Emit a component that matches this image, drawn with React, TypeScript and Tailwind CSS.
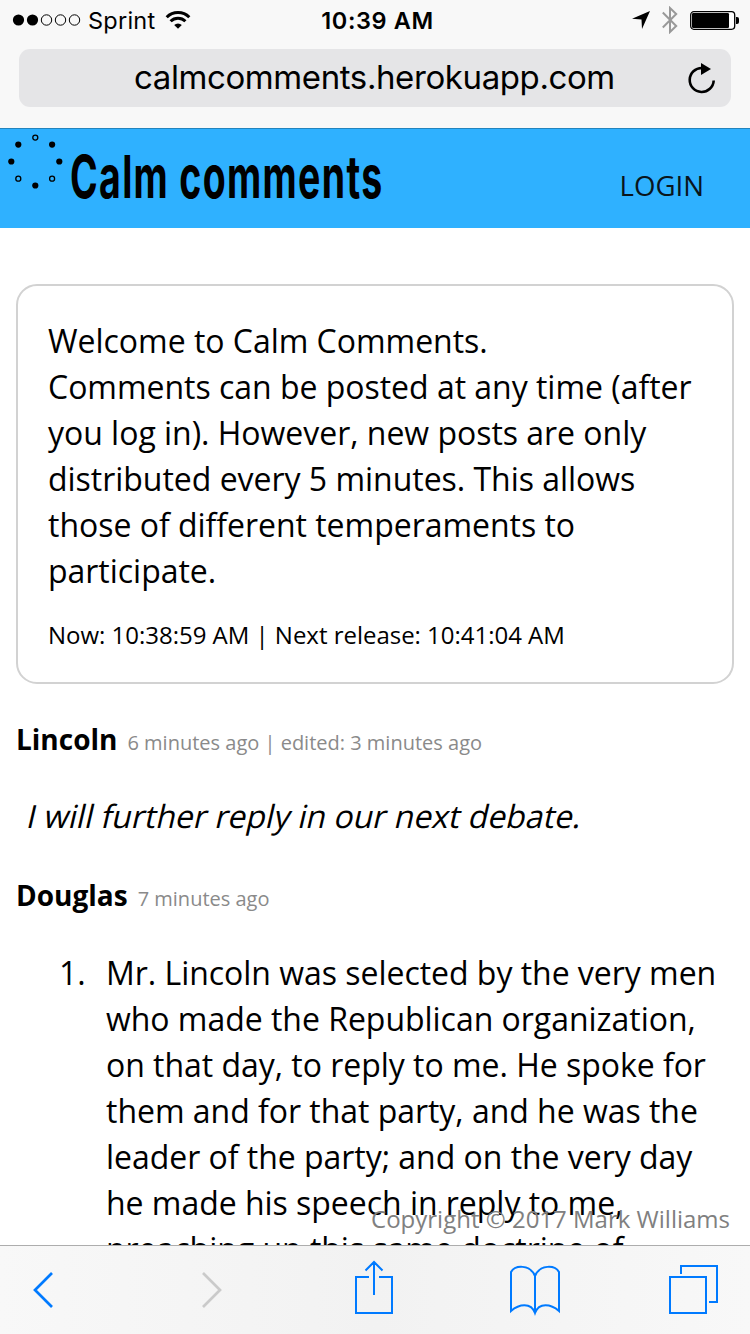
import React from "react";

const welcome = [
  "Welcome to Calm Comments.",
  "Comments can be posted at any time (after",
  "you log in). However, new posts are only",
  "distributed every 5 minutes. This allows",
  "those of different temperaments to",
  "participate.",
];

const speech = [
  "Mr. Lincoln was selected by the very men",
  "who made the Republican organization,",
  "on that day, to reply to me. He spoke for",
  "them and for that party, and he was the",
  "leader of the party; and on the very day",
  "he made his speech in reply to me,",
  "preaching up this same doctrine of",
];

function StatusBar() {
  return (
    <div className="flex h-10 items-center font-['Inter',sans-serif] text-black">
      <div className="flex flex-1 items-center">
        <svg className="ml-3 h-3 w-[70px]" viewBox="12 0 70 12">
          <circle cx="18.5" cy="6" r="5.6" />
          <circle cx="32.5" cy="6" r="5.6" />
          <g fill="none" stroke="#000" strokeWidth="1">
            <circle cx="46.5" cy="6" r="5.2" />
            <circle cx="60.5" cy="6" r="5.2" />
            <circle cx="74.5" cy="6" r="5.2" />
          </g>
        </svg>
        <span className="ml-[6px] w-[68px] whitespace-nowrap pt-px text-[23.5px] leading-10 tracking-[0.25px]">Sprint</span>
        <svg className="ml-[9px] h-[20px] w-[26px]" viewBox="0 0 26 20">
          <g fill="none" stroke="#000" strokeWidth="3">
            <path d="M1.7 7.2 A16 16 0 0 1 24.3 7.2" />
            <path d="M5.6 11.2 A10.5 10.5 0 0 1 20.4 11.2" />
          </g>
          <path d="M13 18.8 L9.2 15 A5.4 5.4 0 0 1 16.8 15 Z" />
        </svg>
      </div>
      <span className="ml-[5px] whitespace-nowrap pt-0.5 text-[23.5px] font-semibold leading-10 tracking-[0.6px]">10:39 AM</span>
      <div className="flex flex-1 items-center justify-end">
        <svg className="h-[18px] w-[18px]" viewBox="0 0 18 18">
          <path d="M18 0 L10 18 L9.5 8.5 L0 7.8 Z" />
        </svg>
        <svg className="ml-3 h-7 w-4" viewBox="0 0 16 28" fill="none" stroke="#999" strokeWidth="2">
          <path d="M.8 6.5 L14.2 20 L8 26 V2 L14.2 8 L.8 21.5" />
        </svg>
        <svg className="ml-3 mr-[11px] h-[19px] w-[49px]" viewBox="0 0 49 19">
          <rect x=".7" y=".7" width="44" height="17.6" rx="3.2" fill="#fff" stroke="#000" strokeWidth="1.3" />
          <rect x="2" y="2" width="37" height="15" rx="1.2" />
          <path d="M46 6 h1 q2 0 2 2 v3 q0 2 -2 2 h-1 Z" />
        </svg>
      </div>
    </div>
  );
}

function AddressBar() {
  return (
    <div className="mx-[19px] mt-[9px] flex h-[58px] items-center rounded-[11px] bg-[#e5e5e7]">
      <span className="ml-[115px] w-[482px] shrink-0 whitespace-nowrap pb-0.5 font-['Inter',sans-serif] text-[33px] leading-[56px] tracking-[-0.4px] text-black">
        calmcomments.herokuapp.com
      </span>
      <svg className="ml-[72px] h-[31px] w-7 shrink-0" viewBox="0 0 28 31">
        <path d="M14 5 A12 12 0 1 0 25.7 17.5" fill="none" stroke="#000" strokeWidth="2.6" />
        <path d="M13 0 L23 6 L13 12 Z" />
      </svg>
    </div>
  );
}

function SiteHeader() {
  return (
    <header className="flex h-[100px] shrink-0 border-t border-[#2384bd] bg-[#2fb1ff] text-black">
      <svg className="ml-[7px] mt-[5px] h-[58px] w-[58px]" viewBox="7 134 58 58">
        <circle cx="18.3" cy="144.6" r="3.1" />
        <circle cx="52.1" cy="144.6" r="3.1" />
        <circle cx="11.3" cy="161.5" r="3.1" />
        <circle cx="59.3" cy="161.5" r="3.1" />
        <circle cx="35.3" cy="185.5" r="3.1" />
        <g fill="none" stroke="#000" strokeWidth="1.3">
          <circle cx="35.3" cy="137.6" r="2.5" />
          <circle cx="18.3" cy="178.7" r="2.5" />
          <circle cx="52.1" cy="178.7" r="2.5" />
        </g>
      </svg>
      <h1 className="ml-[5px] mt-[12px] w-[313px] origin-left scale-x-[0.635] whitespace-nowrap font-['Inter',sans-serif] text-[59px] font-[650] leading-[72px] tracking-[2.1px]">
        Calm comments
      </h1>
      <a className="ml-auto mr-[46px] mt-[38px] font-['Open_Sans',sans-serif] text-[27.6px] leading-[37px] text-[#09151c]">LOGIN</a>
    </header>
  );
}

function Byline({ name, time }: { name: string; time: string }) {
  return (
    <div className="ml-4 flex h-[46px] items-baseline whitespace-nowrap leading-[46px]">
      <b className="text-[28px] font-bold">{name}</b>
      <span className="ml-[10px] text-[20px] text-[#8a8a8a]">{time}</span>
    </div>
  );
}

function Toolbar() {
  return (
    <nav className="flex h-[89px] shrink-0 items-start border-t border-[#adadad] bg-gradient-to-r from-[#f8f8f8] via-[#f2f2f2] to-[#f8f8f8]">
      <svg className="ml-[32px] mt-[25px] h-[38px] w-[22px]" viewBox="0 0 22 38" fill="none" stroke="#007aff" strokeWidth="2.7">
        <path d="M20 2 L3 19 L20 36" />
      </svg>
      <svg className="ml-[147px] mt-[25px] h-[38px] w-[22px]" viewBox="0 0 22 38" fill="none" stroke="#cacaca" strokeWidth="2.7">
        <path d="M2 2 L19 19 L2 36" />
      </svg>
      <svg className="ml-[131px] mt-[14px] h-[56px] w-10" viewBox="0 0 40 56" fill="none" stroke="#007aff" strokeWidth="2">
        <path d="M15 17 H2 V53 H38 V17 H25 M20 35 V3 M11.5 10.5 L20 2 L28.5 10.5" />
      </svg>
      <svg className="ml-[115px] mt-[18px] h-[52px] w-[52px]" viewBox="0 0 52 52" fill="none" stroke="#007aff" strokeWidth="2">
        <path d="M26 49 V12 C21 0 6 1 2 8 V47 C10 40 22 38 26 49 C30 38 42 40 50 47 V8 C46 1 31 0 26 12" />
      </svg>
      <svg className="ml-[107px] mt-[17px] h-[52px] w-[52px]" viewBox="0 0 52 52" fill="none" stroke="#007aff" strokeWidth="2">
        <path d="M2 14 H38 V50 H2 Z M13 11 V3 H49 V39 H41" />
      </svg>
    </nav>
  );
}

export default function App() {
  return (
    <div className="flex h-[1334px] w-[750px] flex-col overflow-hidden bg-white font-['Open_Sans',sans-serif] text-black">
      <div className="h-32 shrink-0 bg-[#f8f8f8]">
        <StatusBar />
        <AddressBar />
      </div>
      <SiteHeader />
      <main className="relative min-h-0 flex-1 overflow-hidden pt-14">
        <section className="mx-4 h-[400px] rounded-[21px] border-2 border-[#d2d2d2] pl-[30px] pt-8">
          {welcome.map((line) => (
            <p key={line} className="whitespace-nowrap text-[32px] leading-[46px] tracking-[-0.025px]">{line}</p>
          ))}
          <p className="mt-[18px] whitespace-nowrap text-[24px] leading-[46px] tracking-[-0.02px]">
            Now: 10:38:59 AM | Next release: 10:41:04 AM
          </p>
        </section>
        <article className="pt-8">
          <Byline name="Lincoln" time="6 minutes ago | edited: 3 minutes ago" />
          <p className="ml-7 mt-[31px] -skew-x-[13deg] whitespace-nowrap text-[32px] leading-[46px]">
            I will further reply in our next debate.
          </p>
        </article>
        <article className="pt-[33px]">
          <Byline name="Douglas" time="7 minutes ago" />
          <div className="mt-8 flex text-[32px] leading-[46px] tracking-[-0.03px]">
            <span className="ml-[59px] w-[47px]">1.</span>
            <div className="whitespace-nowrap">
              {speech.map((line) => (
                <p key={line}>{line}</p>
              ))}
            </div>
          </div>
        </article>
        <footer className="absolute bottom-[10px] right-5 whitespace-nowrap text-[24px] leading-[33px] text-[#808080]">
          Copyright © 2017 Mark Williams
        </footer>
      </main>
      <Toolbar />
    </div>
  );
}
